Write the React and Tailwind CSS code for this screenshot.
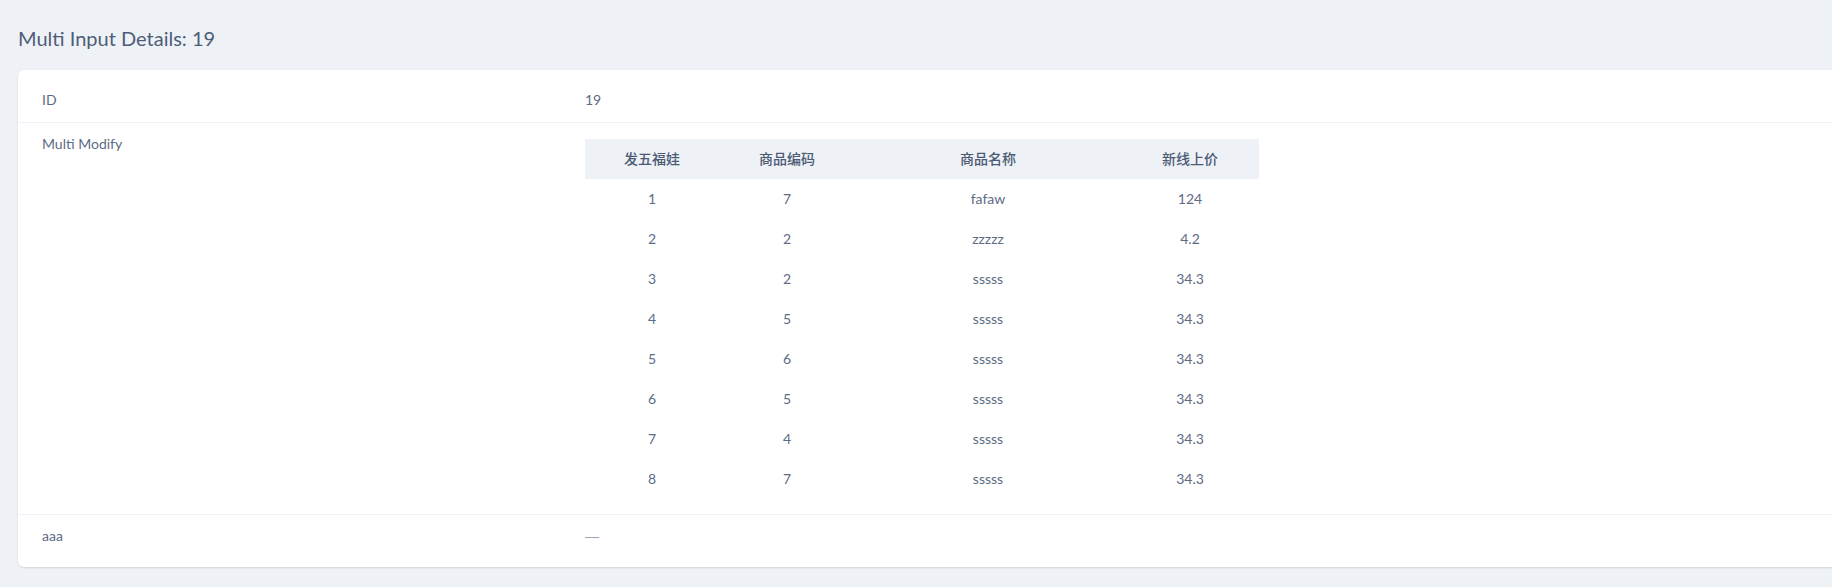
import React from "react";

const rows = [
  [1, 7, "fafaw", "124"],
  [2, 2, "zzzzz", "4.2"],
  [3, 2, "sssss", "34.3"],
  [4, 5, "sssss", "34.3"],
  [5, 6, "sssss", "34.3"],
  [6, 5, "sssss", "34.3"],
  [7, 4, "sssss", "34.3"],
  [8, 7, "sssss", "34.3"],
];

export default function App() {
  return (
    <div
      className="min-h-[587px] w-full overflow-hidden bg-[#eef1f6] text-[#5d6b85]"
      style={{ fontFamily: 'Lato, "Noto Sans CJK SC", sans-serif' }}
    >
      <h1 className="pl-[18px] pt-[24px] text-[20px] leading-[28px] font-normal text-[#4e5d77]">
        Multi Input Details: 19
      </h1>
      <div className="ml-[18px] mt-[18px] w-[1840px] rounded-[6px] bg-white shadow-[0_1px_2px_rgba(0,0,0,0.12)]">
        <div className="flex border-b border-[#eef0f5] px-[24px] pt-[20px] pb-[12px] text-[14px] leading-[20px]">
          <div className="w-[543px] shrink-0">ID</div>
          <div>19</div>
        </div>
        <div className="flex border-b border-[#eef0f5] px-[24px] pt-[16px] pb-[15px] text-[14px] leading-[20px]">
          <div className="-mt-[5px] w-[543px] shrink-0">Multi Modify</div>
          <table className="border-collapse text-center">
            <thead>
              <tr className="h-[40px] bg-[#eef1f6] text-[#4c5a74]">
                <th className="w-[134px] font-medium">发五福娃</th>
                <th className="w-[136px] font-medium">商品编码</th>
                <th className="w-[266px] font-medium">商品名称</th>
                <th className="w-[138px] font-medium">新线上价</th>
              </tr>
            </thead>
            <tbody>
              {rows.map((r) => (
                <tr key={r[0]} className="h-[40px]">
                  <td>{r[0]}</td>
                  <td>{r[1]}</td>
                  <td>{r[2]}</td>
                  <td>{r[3]}</td>
                </tr>
              ))}
            </tbody>
          </table>
        </div>
        <div className="flex px-[24px] pt-[11px] pb-[21px] text-[14px] leading-[20px]">
          <div className="w-[543px] shrink-0">aaa</div>
          <div
            className="text-[#9aa4b6]"
            style={{ fontFamily: '"Liberation Sans", sans-serif' }}
          >
            —
          </div>
        </div>
      </div>
    </div>
  );
}
